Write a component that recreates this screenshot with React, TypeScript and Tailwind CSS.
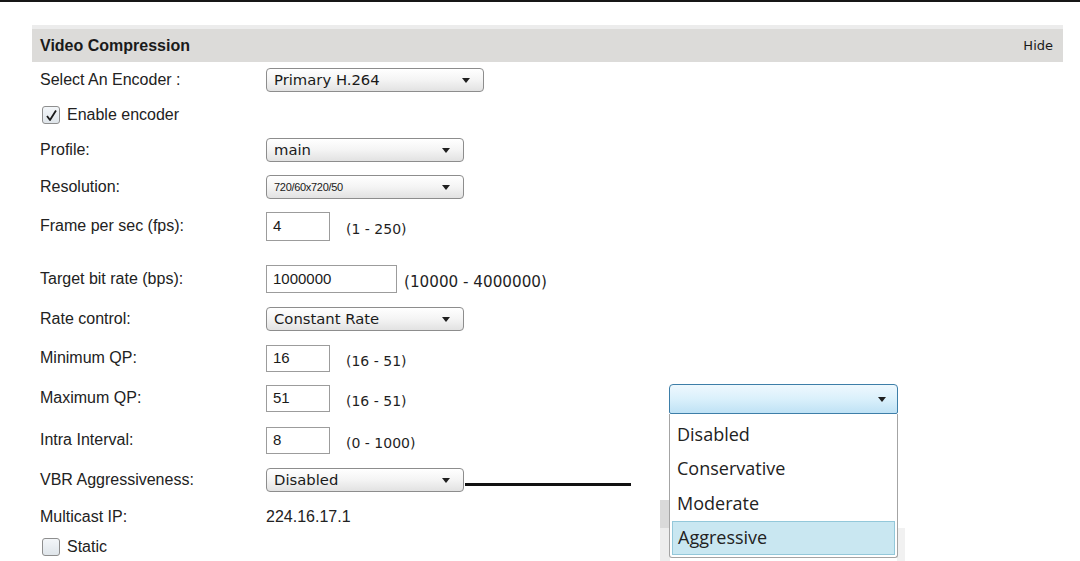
import React from 'react';

const labelFont = { fontFamily: '"Liberation Sans", Arial, sans-serif' };
const verdana = { fontFamily: '"DejaVu Sans", Verdana, sans-serif' };

const Arrow = () => (
  <svg width="8" height="5" viewBox="0 0 8 5" className="shrink-0" aria-hidden="true">
    <path d="M0 0 L8 0 L4 5 Z" fill="#1f1f1f" />
  </svg>
);

const Select: React.FC<{ value: string; width: string; small?: boolean }> = ({ value, width, small }) => (
  <div
    className={`${width} h-[24px] flex items-center justify-between pl-[7px] pr-[13px] rounded-[4px] border border-[#8d8d8d] bg-gradient-to-b from-[#ffffff] via-[#f4f4f4] to-[#e2e2e2] shadow-[inset_0_1px_0_#ffffff]`}
  >
    {small ? (
      <span className="text-[11px] text-[#1a1a1a] tracking-[-0.3px]" style={labelFont}>{value}</span>
    ) : (
      <span className="text-[14.8px] text-[#1a1a1a]" style={verdana}>{value}</span>
    )}
    <Arrow />
  </div>
);

const TextBox: React.FC<{ value: string; width: string; height: string; range?: string; rangeClass?: string }> = ({
  value,
  width,
  height,
  range,
  rangeClass = 'ml-[16px] text-[14px]',
}) => (
  <div className="flex items-center">
    <div
      className={`${width} ${height} flex items-center pl-[6px] border border-[#9c9c9c] bg-white text-[15px] text-[#1a1a1a]`}
      style={labelFont}
    >
      {value}
    </div>
    {range && (
      <span className={`${rangeClass} text-[#1f1f1f] pt-[6px]`} style={verdana}>{range}</span>
    )}
  </div>
);

const Row: React.FC<{ label: string; h: string; children?: React.ReactNode; extra?: string }> = ({ label, h, children, extra = '' }) => (
  <div className={`flex items-center ${h} ${extra}`}>
    <div className="w-[226px] text-[16px] text-[#222]" style={labelFont}>
      {label}
    </div>
    {children}
  </div>
);

const Checkbox: React.FC<{ checked?: boolean }> = ({ checked }) => (
  <div className="w-[18px] h-[18px] rounded-[3px] border border-[#8e8e8e] bg-gradient-to-b from-[#f3f6f9] to-[#dfe5ea] flex items-center justify-center">
    {checked && (
      <svg width="13" height="13" viewBox="0 0 13 13" aria-hidden="true">
        <path d="M2 7 L5 11 L11 1.5" fill="none" stroke="#1a1a1a" strokeWidth="1.8" strokeLinejoin="round" />
      </svg>
    )}
  </div>
);

export default function App() {
  const options = ['Disabled', 'Conservative', 'Moderate', 'Aggressive'];

  return (
    <div className="relative w-[1080px] h-[561px] bg-white overflow-hidden">
      <div className="h-[2px] bg-[#161616]" />

      <div className="pt-[23px]">
        {/* Section header */}
        <div className="ml-[32px] w-[1031px] border-t-[4px] border-[#ececec]">
          <div className="h-[33px] bg-[#dcdbd9] flex items-center justify-between pl-[8px] pr-[10px]">
            <span className="text-[16px] font-bold text-[#1a1a1a]" style={labelFont}>Video Compression</span>
            <span className="text-[13px] text-[#1a1a1a]" style={verdana}>Hide</span>
          </div>
        </div>

        <div className="pl-[40px]">
          <Row label="Select An Encoder :" h="h-[36px]">
            <Select value="Primary H.264" width="w-[218px]" />
          </Row>

          <div className="flex items-center h-[34px] ml-[2px]">
            <Checkbox checked />
            <span className="ml-[7px] text-[16px] text-[#222]" style={labelFont}>Enable encoder</span>
          </div>

          <Row label="Profile:" h="h-[36px]">
            <Select value="main" width="w-[198px]" />
          </Row>

          <Row label="Resolution:" h="h-[38px]">
            <Select value="720/60x720/50" width="w-[198px]" small />
          </Row>

          <Row label="Frame per sec (fps):" h="h-[40px]">
            <TextBox value="4" width="w-[64px]" height="h-[29px]" range="(1 - 250)" />
          </Row>

          <Row label="Target bit rate (bps):" h="h-[40px]" extra="mt-[13px]">
            <TextBox
              value="1000000"
              width="w-[131px]"
              height="h-[28px]"
              range="(10000 - 4000000)"
              rangeClass="ml-[7px] text-[15.2px]"
            />
          </Row>

          <Row label="Rate control:" h="h-[40px]">
            <Select value="Constant Rate" width="w-[198px]" />
          </Row>

          <Row label="Minimum QP:" h="h-[38px]">
            <TextBox value="16" width="w-[64px]" height="h-[27px]" range="(16 - 51)" />
          </Row>

          <Row label="Maximum QP:" h="h-[42px]">
            <TextBox value="51" width="w-[64px]" height="h-[27px]" range="(16 - 51)" />
          </Row>

          <Row label="Intra Interval:" h="h-[42px]">
            <TextBox value="8" width="w-[64px]" height="h-[27px]" range="(0 - 1000)" />
          </Row>

          <Row label="VBR Aggressiveness:" h="h-[38px]">
            <Select value="Disabled" width="w-[198px]" />
          </Row>

          <Row label="Multicast IP:" h="h-[36px]">
            <span className="text-[16px] text-[#222]" style={labelFont}>224.16.17.1</span>
          </Row>

          <div className="flex items-center h-[24px] ml-[2px]">
            <Checkbox />
            <span className="ml-[7px] text-[16px] text-[#222]" style={labelFont}>Static</span>
          </div>
        </div>
      </div>

      {/* callout line */}
      <div className="absolute left-[465px] top-[483px] w-[166px] h-[3px] bg-[#111]" />

      {/* backdrop from underlying screenshot */}
      <div className="absolute left-[660px] top-[500px] w-[10px] h-[28px] bg-[#dadada]" />
      <div className="absolute left-[660px] top-[528px] w-[10px] h-[33px] bg-[#ededed]" />
      <div className="absolute left-[897px] top-[528px] w-[8px] h-[33px] bg-[#f1f1f1]" />

      {/* open dropdown */}
      <div className="absolute left-[669px] top-[384px] w-[229px]">
        <div className="h-[30px] rounded-t-[4px] rounded-b-[2px] border border-[#3d7ea8] bg-gradient-to-b from-[#eef8fe] via-[#daf0fb] to-[#bfe2f5] flex items-center justify-end pr-[11px]">
          <Arrow />
        </div>
        <div className="h-[144px] border border-[#a4a4a4] border-t-0 bg-white rounded-b-[3px] pt-[3px] px-[2px]">
          {options.map((o) => (
            <div
              key={o}
              className={`h-[34.5px] flex items-center pl-[5px] text-[18px] text-[#222] ${o === 'Aggressive' ? 'bg-[#c9e7f1] border border-[#93c8da]' : ''}`}
              style={{ fontFamily: '"Open Sans", "DejaVu Sans", sans-serif' }}
            >
              {o}
            </div>
          ))}
        </div>
      </div>
    </div>
  );
}
